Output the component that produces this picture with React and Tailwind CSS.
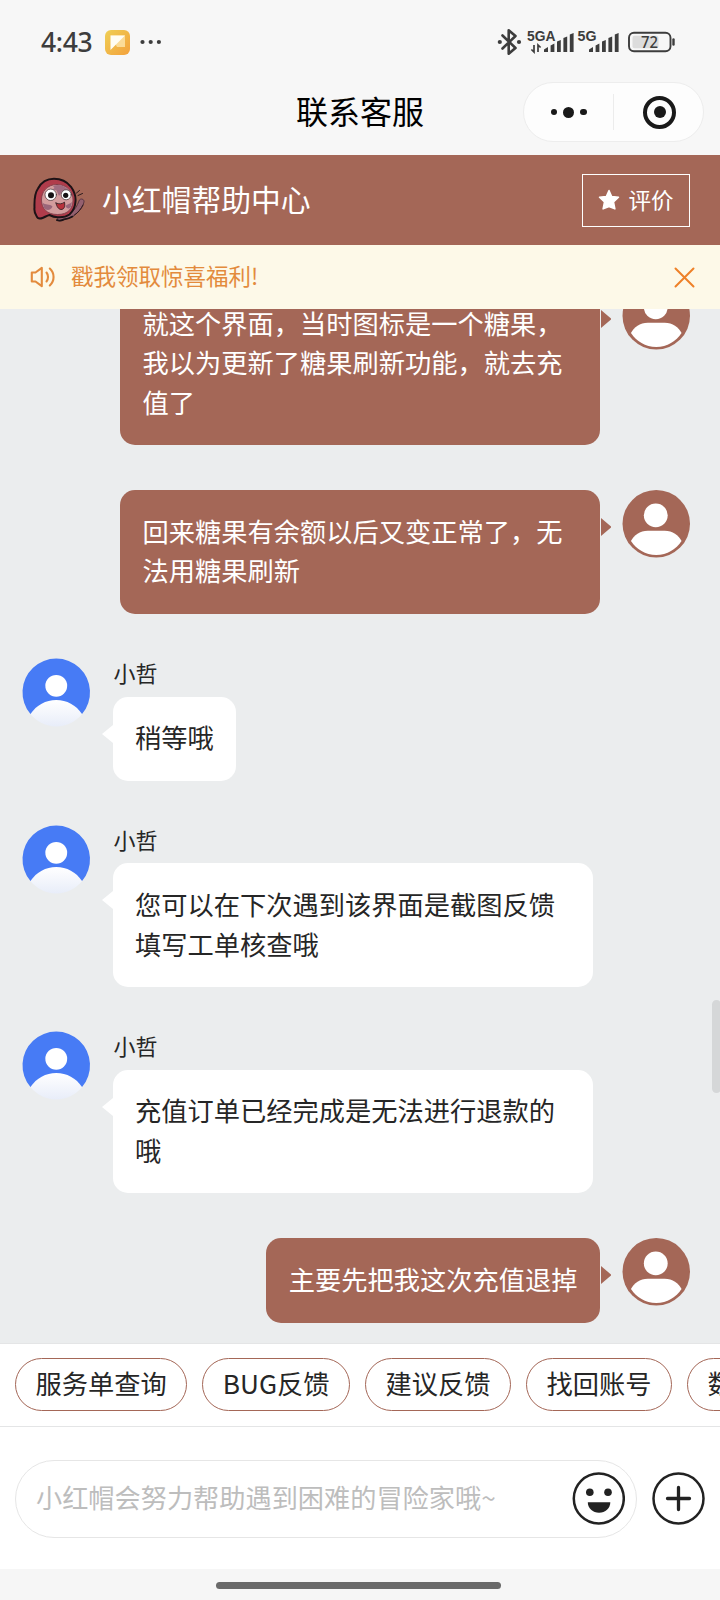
import clsx from 'clsx';

const messages = [
  { id: 1, own: true, text: '就这个界面，当时图标是一个糖果，我以为更新了糖果刷新功能，就去充值了' },
  { id: 2, own: true, text: '回来糖果有余额以后又变正常了，无法用糖果刷新' },
  { id: 3, own: false, name: '小哲', text: '稍等哦' },
  { id: 4, own: false, name: '小哲', text: '您可以在下次遇到该界面是截图反馈填写工单核查哦' },
  { id: 5, own: false, name: '小哲', text: '充值订单已经完成是无法进行退款的哦' },
  { id: 6, own: true, text: '主要先把我这次充值退掉' },
];

const quickActions = ['服务单查询', 'BUG反馈', '建议反馈', '找回账号', '数据异常'];

function SignalBars({ x }) {
  return (
    <g fill="#3d3d3d">
      <path d={`M${x} 52v-2.500l4-2.500v5z`} />
      <path d={`M${x + 6.6} 52v-6.500l3.800-2v8.500z`} />
      <path d={`M${x + 13} 52v-10.500l3.800-1.600v12.100z`} />
      <path d={`M${x + 19.4} 52v-14l3.800-1.500v15.500z`} />
      <path d={`M${x + 25.8} 52v-17.500l3.800-1.600v19.100z`} />
    </g>
  );
}

function StatusBar() {
  return (
    <div className="flex h-[70px] items-start justify-between pl-[41px]">
      <div className="flex h-[84px] items-center">
        <span className="w-[64px] font-['Noto_Sans'] text-[26.500px] leading-none font-medium tracking-[-0.3px] text-[#3d3d3d]">4:43</span>
        <svg className="h-[25px] w-[25px]" viewBox="0 0 25 25">
          <defs>
            <linearGradient id="note" x1="0" y1="0" x2="1" y2="1">
              <stop offset="0" stopColor="#efcf55" />
              <stop offset="1" stopColor="#f3a13c" />
            </linearGradient>
          </defs>
          <rect width="25" height="25" rx="6" fill="url(#note)" />
          <path d="M5.500 5.500h14.500v11.500h-8z" fill="#fbdc98" />
          <path d="M5.500 5.500h14.500L5.500 20z" fill="#fffdf4" />
        </svg>
        <svg className="ml-2.5 h-5 w-6" viewBox="0 0 24 20" fill="#3d3d3d">
          <circle cx="2.500" cy="10" r="2.100" />
          <circle cx="10.700" cy="10" r="2.100" />
          <circle cx="18.900" cy="10" r="2.100" />
        </svg>
      </div>

      <svg className="h-[70px] w-[230px]" viewBox="490 0 230 70">
        <path
          d="M502.500 35.500l13 12.500-6.800 5.700V30.300l6.800 5.700-13 12.500"
          fill="none"
          stroke="#3d3d3d"
          strokeWidth="2.600"
          strokeLinejoin="round"
          strokeLinecap="round"
        />
        <circle cx="499.800" cy="42" r="2.100" fill="#3d3d3d" />
        <circle cx="519" cy="42" r="2.100" fill="#3d3d3d" />
        <text x="527" y="41" fontSize="15" fontWeight="600" fill="#3d3d3d" textLength="28.500" lengthAdjust="spacingAndGlyphs" className="font-['Liberation_Sans']">5GA</text>
        <path d="M534 45v7l-2.600-2.500M538 52v-7l2.600 2.500" fill="none" stroke="#3d3d3d" strokeWidth="1.700" />
        <SignalBars x={544} />
        <text x="577.500" y="41" fontSize="15" fontWeight="600" fill="#3d3d3d" textLength="19" lengthAdjust="spacingAndGlyphs" className="font-['Liberation_Sans']">5G</text>
        <SignalBars x={589} />
        <rect x="629" y="32.800" width="41.500" height="18.500" rx="5" fill="none" stroke="#3d3d3d" strokeWidth="1.900" />
        <rect x="632.500" y="35.800" width="26" height="12.500" rx="2" fill="#dcdcdc" />
        <path d="M673.500 39.500v5" stroke="#3d3d3d" strokeWidth="2.400" strokeLinecap="round" />
        <text x="641" y="48" fontSize="16" fontWeight="500" fill="#3d3d3d" textLength="17" lengthAdjust="spacingAndGlyphs" className="font-['Noto_Sans']">72</text>
      </svg>
    </div>
  );
}

function NavBar() {
  return (
    <div className="grid h-[85px] grid-cols-[1fr_auto_1fr] items-center">
      <span />
      <h1 className="pb-[5px] text-[32px] leading-none text-black">联系客服</h1>
      <div className="mr-4 mb-px flex h-[60px] w-[181px] items-center justify-self-end rounded-full border border-[#ededed] bg-[#fdfdfd]">
        <div className="flex w-[89px] items-center justify-center gap-[6px]">
          <span className="h-[6.500px] w-[6.500px] rounded-full bg-[#191919]" />
          <span className="h-[11px] w-[11px] rounded-full bg-[#191919]" />
          <span className="h-[6.500px] w-[6.500px] rounded-full bg-[#191919]" />
        </div>
        <span className="h-9 w-px bg-[#ececec]" />
        <div className="flex flex-1 justify-center pl-[2px]">
          <span className="flex h-[33px] w-[33px] items-center justify-center rounded-full border-4 border-[#191919]">
            <span className="h-3 w-3 rounded-full bg-[#191919]" />
          </span>
        </div>
      </div>
    </div>
  );
}

function Mascot() {
  return (
    <svg className="h-[46px] w-[54px]" viewBox="0 0 54 45" strokeLinecap="round" strokeLinejoin="round">
      <path d="M24 42.500c1-3 3-4.500 6-5l8-3c4-2 6-6 8-11 .600-3 5.500-2.500 5 1-.600 4-4 8-7 11-4 4-9 6-13 6.500-2 1.500-6 2-7 .500z" fill="#94606f" stroke="#5a3540" strokeWidth="1" />
      <path d="M24 42.700c3 1 5.500 0 7-.800 3-.400 6-1.200 8.500-2.800" fill="none" stroke="#1d1216" strokeWidth="1.800" />
      <path d="M9.500 40.500c-2.500 1-5 .500-6-2-2-3-2.500-5-2-8.500C1.200 22 1.500 16 5 11 8.500 4.500 14 1.300 21 1.300c7 0 13 3 17 8 3.500 5 5 9 4.500 14.500-.300 6-2.500 10-6 13.200-3.500 2.500-8 3-12 2.700-4-.200-6-1.200-8-2.200-2.500.500-4.500 2-7 3z" fill="#b03c4b" stroke="#1d1216" strokeWidth="2" />
      <path d="M24 7C14 7 8.500 14 8.500 22.500S14 37 24.500 37 40 31 40 22.500 34 7 24 7z" fill="#d39c9d" stroke="#7a3a46" strokeWidth=".800" />
      <path d="M20 8.500c6-2.500 12-.500 16 4.500l2 4-5-4-3.500.500-3.500 5-2.500-5.500-4-1 2-1.500z" fill="#a06c80" />
      <path d="M9.500 25c3 3 7 1 10 4-1.500 4-6 4.500-8.500 1.500zM39 24.500c-2 2-4.500 2-6.500 4 1 3 4 3.500 5.500.500z" fill="#9a667a" />
      <circle cx="17.700" cy="17.300" r="5.700" fill="#fff" stroke="#2a171c" strokeWidth=".600" />
      <circle cx="33.200" cy="17.300" r="5" fill="#fff" stroke="#2a171c" strokeWidth=".600" />
      <circle cx="18" cy="17.800" r="3" fill="#161214" />
      <circle cx="32.700" cy="17.800" r="2.600" fill="#161214" />
      <path d="M23 25.500c3 1.500 6 1 8.500-.800.800 4.800-.500 7.300-3.500 7.300-2.500-.200-4.300-2.700-5-6.500z" fill="#b8323c" stroke="#2a171c" strokeWidth=".800" />
      <path d="M43.500 15.500l3-2.500M45 18l4.500-2" fill="none" stroke="#1d1216" strokeWidth=".900" />
      <path d="M41.500 37.500c4-2.500 6.500-6 8.500-10" fill="none" stroke="#2a171c" strokeWidth=".900" />
    </svg>
  );
}

function BrandBar() {
  return (
    <div className="flex h-[90px] items-center bg-[#a46757] pr-[30px] pl-[33px] text-white">
      <Mascot />
      <span className="ml-[15px] flex-1 pb-[2px] text-[29.800px] leading-none">小红帽帮助中心</span>
      <button className="flex h-[53px] w-[108px] items-center justify-center gap-2 border-[1.500px] border-white text-[22.500px] leading-none" type="button">
        <svg className="h-[22px] w-[22px]" viewBox="0 0 22 22" fill="#fff" stroke="#fff" strokeWidth="1.500" strokeLinejoin="round">
          <path d="M11 1.500l2.700 6.100 6.800.700-5 4.600 1.400 7L11 17.500l-5.900 2.400 1.400-7-5-4.600 6.800-.700z" />
        </svg>
        <span className="pb-[2px]">评价</span>
      </button>
    </div>
  );
}

function NoticeBar() {
  return (
    <div className="flex h-16 items-center bg-[#fdf9e8] pr-[25px] pl-[30px] text-[#e38b3d]">
      <svg className="h-6 w-[26px]" viewBox="0 0 26 24" fill="none" stroke="currentColor" strokeWidth="2.100" strokeLinejoin="round" strokeLinecap="round">
        <path d="M1.800 7.500h3.700l6.300-4.700v18.400l-6.300-4.700H1.800z" />
        <path d="M16.500 7.500c2 2.500 2 6.500 0 9M19.800 3.500c5 4.500 5 12.500 0 17" />
      </svg>
      <span className="ml-[15px] flex-1 pb-[3px] text-[22.500px] leading-none">戳我领取惊喜福利!</span>
      <svg className="h-[21px] w-[21px]" viewBox="0 0 21 21" stroke="#ee8128" strokeWidth="2" strokeLinecap="round">
        <path d="M1.500 1.500l18 18M19.500 1.500l-18 18" />
      </svg>
    </div>
  );
}

function UserAvatar() {
  return (
    <svg className="h-[67.500px] w-[67.500px] shrink-0 overflow-visible" viewBox="0 0 68 68">
      <circle cx="33.500" cy="34" r="34" fill="#a46757" />
      <circle cx="33" cy="25.500" r="12" fill="#fff" />
      <path d="M8 51.500c3-6 9-10.500 17-10.500h17c8 0 14 4.500 17 10.500C53.500 60 44.500 65.500 33.500 65.500S13.500 60 8 51.500z" fill="#fff" />
    </svg>
  );
}

function AgentAvatar() {
  return (
    <svg className="h-[67.500px] w-[67.500px] shrink-0 overflow-visible" viewBox="1 0 68 68">
      <defs>
        <linearGradient id="shoulders" x1="0" y1="0" x2="0" y2="1">
          <stop offset="0" stopColor="#fff" />
          <stop offset="1" stopColor="#e8edf9" />
        </linearGradient>
      </defs>
      <path d="M8.500 55.500A34 34 0 1 1 60.500 55.500z" fill="#477bf5" />
      <circle cx="34.500" cy="27" r="11" fill="#fff" />
      <path d="M8.500 55.500C14.500 46.500 24 41.300 34.500 41.300S54.500 46.500 60.500 55.500C54.500 63 45 68 34.500 68S14.500 63 8.500 55.500z" fill="url(#shoulders)" />
    </svg>
  );
}

function Message({ message }) {
  const { own, name, text } = message;

  return (
    <div className={clsx('flex items-start gap-[22.500px]', own && 'flex-row-reverse')}>
      {own ? <UserAvatar /> : <AgentAvatar />}
      <div>
        {!own && <p className="h-[37.500px] pl-px text-[22px] leading-[27px] text-[#262626]">{name}</p>}
        <div
          className={clsx(
            'relative max-w-[480px] rounded-[15px] px-[22.500px] pt-[21.800px] pb-[23.200px] text-[26.250px] leading-[39.375px]',
            own ? 'bg-[#a46757] text-white' : 'bg-white text-[#262626]',
          )}
        >
          {text}
          {own ? (
            <svg className="absolute top-[28px] -right-[11px] h-[18px] w-[10.500px]" viewBox="0 0 10.5 18" fill="#a46757">
              <path d="M0 0l10.500 9L0 18z" />
            </svg>
          ) : (
            <svg className="absolute top-[28px] -left-[10.500px] h-[18px] w-[11px]" viewBox="0 0 11 18" fill="#fff">
              <path d="M11 0L0 9l11 9z" />
            </svg>
          )}
        </div>
      </div>
    </div>
  );
}

function MessageList() {
  return (
    <main className="relative flex min-h-0 flex-1 flex-col justify-end gap-[45px] overflow-hidden bg-[#ebedee] pr-[30px] pb-[20.300px] pl-[22.500px]">
      {messages.map((message) => (
        <Message key={message.id} message={message} />
      ))}
      <span className="absolute top-[691px] -right-px h-[93px] w-[9px] rounded-full bg-[#d5d7d8]" />
    </main>
  );
}

function QuickActions() {
  return (
    <div className="flex h-[84px] gap-[15px] overflow-hidden border-y border-[#e4e5e6] bg-white pt-[14px] pl-[15px]">
      {quickActions.map((label) => (
        <button
          className="h-[53px] shrink-0 rounded-full border-[1.500px] border-[#a46757] px-[19.500px] pb-[2px] text-[26.250px] leading-none text-[#262626]"
          key={label}
          type="button"
        >
          {label}
        </button>
      ))}
    </div>
  );
}

function Composer() {
  return (
    <div className="flex h-[142px] items-center gap-[15px] bg-white px-[15px] pt-px">
      <div className="flex h-[78px] flex-1 items-center justify-between rounded-full border border-[#e6e6e6] pr-[11px] pl-5">
        <span className="pb-[2px] text-[26.200px] leading-none text-[#bdbdbd]">小红帽会努力帮助遇到困难的冒险家哦~</span>
        <svg className="h-[53px] w-[53px]" viewBox="0 0 53 53">
          <circle cx="26.800" cy="26.500" r="25" fill="none" stroke="#222" strokeWidth="2.500" />
          <circle cx="17.800" cy="20.300" r="3.800" fill="#222" />
          <circle cx="36" cy="20.300" r="3.800" fill="#222" />
          <path d="M15.800 30.300h22.500c0 6-5 10.500-11.200 10.500S15.800 36.300 15.800 30.300z" fill="#222" />
        </svg>
      </div>
      <svg className="h-[53px] w-[53px]" viewBox="0 0 53 53" fill="none" stroke="#222">
        <circle cx="26.500" cy="26.500" r="25" strokeWidth="2.500" />
        <path d="M26.500 15.500v22M15.500 26.500h22" strokeWidth="3.300" strokeLinecap="round" />
      </svg>
    </div>
  );
}

export default function App() {
  return (
    <div className="flex h-[1600px] w-[720px] flex-col overflow-hidden bg-[#f7f7f7] font-['Noto_Sans_CJK_SC',sans-serif] font-normal">
      <StatusBar />
      <NavBar />
      <BrandBar />
      <NoticeBar />
      <MessageList />
      <QuickActions />
      <Composer />
      <footer className="flex h-[31px] justify-center bg-[#f6f6f6] pt-[13px] pr-1">
        <span className="h-[7px] w-[285px] rounded-full bg-[#6a6a6a]" />
      </footer>
    </div>
  );
}
